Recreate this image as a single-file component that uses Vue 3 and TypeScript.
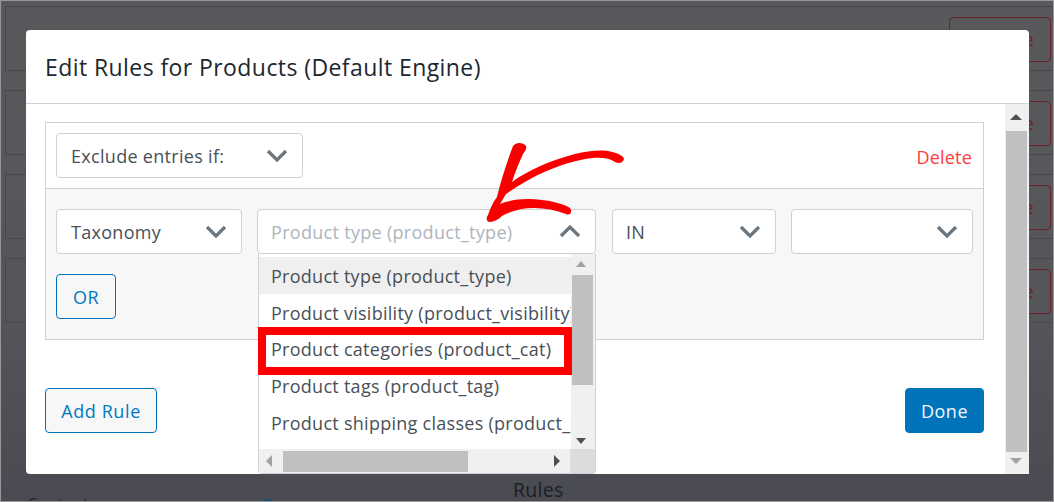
<script setup lang="ts">
const items: string[] = [
  'Product type (product_type)',
  'Product visibility (product_visibility)',
  'Product categories (product_cat)',
  'Product tags (product_tag)',
  'Product shipping classes (product_shipping_class)',
]
const bgRows: number[] = [1, 2, 3, 4]
</script>

<template>
  <div class="page">
    <div class="backdrop-content">
      <div v-for="r in bgRows" :key="r" class="bg-row">
        <span class="bg-btn">Delete</span>
      </div>
      <div class="bg-bottom">
        <div class="bg-left"><span class="bg-label">Content</span><i class="bg-dot"></i></div>
        <div class="bg-right">Rules</div>
      </div>
    </div>

    <div class="modal">
      <header class="modal-head">Edit Rules for Products (Default Engine)</header>
      <div class="modal-body">
        <div class="content">
          <section class="panel">
            <div class="panel-top">
              <div class="select w-exclude"><span>Exclude entries if:</span><svg class="chev" viewBox="0 0 22 13"><path d="M2 2l9 9 9-9" /></svg></div>
              <a class="delete">Delete</a>
            </div>
            <div class="panel-rows">
              <div class="row">
                <div class="select w-tax"><span>Taxonomy</span><svg class="chev" viewBox="0 0 22 13"><path d="M2 2l9 9 9-9" /></svg></div>
                <div class="select w-type open"><span class="ph">Product type (product_type)</span><svg class="chev" viewBox="0 0 22 13"><path d="M2 11l9-9 9 9" /></svg></div>
                <div class="select w-in"><span>IN</span><svg class="chev" viewBox="0 0 22 13"><path d="M2 2l9 9 9-9" /></svg></div>
                <div class="select w-val"><span></span><svg class="chev" viewBox="0 0 22 13"><path d="M2 2l9 9 9-9" /></svg></div>
              </div>
              <button class="btn outline or">OR</button>
            </div>
          </section>
          <div class="actions">
            <button class="btn outline add">Add Rule</button>
            <button class="btn solid done">Done</button>
          </div>
        </div>
        <div class="vbar">
          <i class="tri up dark"></i>
          <div class="vthumb"></div>
          <i class="tri down light"></i>
        </div>
      </div>

      <div class="dropdown">
        <div class="dd-main">
          <ul class="dd-list">
            <li v-for="(it, i) in items" :key="it" :class="{ active: i === 0 }">{{ it }}</li>
          </ul>
          <div class="dd-vbar">
            <i class="tri up light small"></i>
            <div class="dd-vthumb"></div>
            <i class="tri down dark small"></i>
          </div>
        </div>
        <div class="dd-hbar">
          <div class="dd-htrack">
            <i class="tri left light"></i>
            <div class="dd-hthumb"></div>
            <i class="tri right dark"></i>
          </div>
          <div class="dd-corner"></div>
        </div>
        <div class="redbox"></div>
      </div>
    </div>

    <svg class="arrow" viewBox="0 0 1054 502">
      <path d="M513 146 C516 142 523 142 526 146 C527 149 525 151 523 154 C519 163 515 172 512 182 C528 170 552 160 575 154 C588 151 602 149 612 152 C617 153 624 156 624 159 C623 163 619 164 615 162 C608 157 598 157 585 159 C558 164 530 177 506 194 C504 197 502 201 500 204 C512 199 528 198 542 200 C552 201 564 204 570 208 C573 212 570 216 566 214 C556 210 545 208 534 208 C522 208 511 211 502 216 C498 220 493 222 489 222 C486 221 486 218 488 215 C490 209 493 202 497 197 C501 180 507 162 513 146 Z" fill="#f90000" />
    </svg>
  </div>
</template>

<style>
html, body { margin: 0; padding: 0; background: #55565a; }
</style>

<style scoped>
.page {
  position: relative;
  width: 1054px;
  height: 502px;
  overflow: hidden;
  background: linear-gradient(180deg, #58595b 0%, #55565a 60%, #4a4b52 100%);
  border: 1px solid #97979a;
  box-sizing: border-box;
  font-family: "Open Sans", "Noto Sans", sans-serif;
  letter-spacing: 0.3px;
}
.backdrop-content { padding: 5px 0 0 4px; }
.bg-row {
  height: 65px;
  margin-bottom: 19px;
  width: 1100px;
  box-sizing: border-box;
  border: 1px solid #47484c;
  padding: 10px 0 0 943px;
}
.bg-btn {
  display: block;
  width: 102px;
  height: 45px;
  box-sizing: border-box;
  border: 1px solid #6b2228;
  border-radius: 4px;
  color: #6b2228;
  font-size: 18px;
  line-height: 43px;
  text-align: right;
  padding-right: 16px;
}
.bg-bottom { display: flex; height: 60px; margin-top: 156px; }
.bg-left { width: 472px; position: relative; }
.bg-right { flex: 1; padding: 0 0 0 35px; font-size: 19.5px; color: #1b1e22; line-height: 22px; border-left: 1px solid #47484c; font-weight: 500; }
.bg-label { position: absolute; left: 22px; top: 14px; font-size: 16px; color: #222; }
.bg-dot { position: absolute; left: 255px; top: 20px; width: 14px; height: 14px; border-radius: 50%; background: #0f4f78; }

.modal {
  position: absolute;
  left: 25px;
  top: 29px;
  width: 1003px;
  height: 444px;
  background: #fff;
  border-radius: 4px 4px 0 4px;
  display: flex;
  flex-direction: column;
}
.modal-head {
  height: 73px;
  border-bottom: 1px solid #ced2d6;
  box-sizing: content-box;
  padding-left: 19px;
  font-size: 23px;
  font-weight: 500;
  letter-spacing: 0.42px;
  line-height: 75px;
  color: #1c2730;
}
.modal-body { flex: 1; display: flex; min-height: 0; }
.content { flex: 1; padding: 18px 0 0 19px; }
.panel {
  width: 939px;
  height: 218px;
  box-sizing: border-box;
  border: 1px solid #ced2d6;
  display: flex;
  flex-direction: column;
}
.panel-top {
  height: 65px;
  flex: none;
  display: flex;
  align-items: center;
  justify-content: space-between;
  padding: 0 11px 0 10px;
  border-bottom: 1px solid #ced2d6;
}
.delete { color: #ff3b3b; font-size: 18px; letter-spacing: 0.2px; margin-top: 2px; }
.panel-rows { flex: 1; background: #f7f7f7; padding: 20px 10px 0; }
.row { display: flex; gap: 15px; }
.select {
  display: flex;
  align-items: center;
  justify-content: space-between;
  height: 45px;
  box-sizing: border-box;
  background: #fff;
  border: 1px solid #ced2d6;
  border-radius: 4px;
  padding: 0 14px 0 13px;
  font-size: 18px;
  color: #495057;
}
.w-exclude { width: 247px; padding-left: 14px; }
.w-tax { width: 186px; padding-left: 14px; }
.w-type { width: 339px; }
.w-in { width: 164px; margin-left: 1px; }
.w-val { width: 182px; }
.ph { color: #adb5bd; }
.chev { width: 22px; height: 13px; flex: none; }
.chev path { fill: none; stroke: #6b757d; stroke-width: 3.2; }
.btn {
  display: block;
  height: 45px;
  box-sizing: border-box;
  border-radius: 4px;
  font: inherit;
  font-size: 18px;
  letter-spacing: 0.5px;
  padding: 0;
}
.outline { background: #f7f7f7; border: 1px solid #0073ba; color: #0079c0; }
.solid { background: #0073ba; border: 1px solid #0073ba; color: #f2f9ff; }
.or { width: 60px; margin-top: 20px; }
.actions { width: 939px; display: flex; justify-content: space-between; margin-top: 48px; }
.actions .btn { padding-top: 1px; }
.add { width: 112px; letter-spacing: 0.6px; }
.done { width: 79px; }

.vbar {
  width: 24px;
  background: #f0f0f0;
  display: flex;
  flex-direction: column;
  align-items: flex-start;
  padding: 10px 0 10px 1px;
  box-sizing: border-box;
}
.vbar .tri { margin-left: 4px; }
.vthumb { width: 21px; flex: 1; background: #c0c0c0; margin: 11px 0 6px; }
.tri { display: block; width: 0; height: 0; border-style: solid; border-color: transparent; }
.tri.up { border-width: 0 6px 6px; }
.tri.down { border-width: 6px 6px 0; }
.tri.left { border-width: 6px 6px 6px 0; }
.tri.right { border-width: 6px 0 6px 6px; }
.tri.up.dark { border-bottom-color: #505050; }
.tri.up.light { border-bottom-color: #a3a3a3; }
.tri.down.dark { border-top-color: #505050; }
.tri.down.light { border-top-color: #a3a3a3; }
.tri.left.light { border-right-color: #a3a3a3; }
.tri.right.dark { border-left-color: #505050; }

.dropdown {
  position: absolute;
  left: 232px;
  top: 224px;
  width: 338px;
  height: 220px;
  box-sizing: border-box;
  background: #fff;
  border: 1px solid #ced2d6;
  border-top: 0;
  border-radius: 0 0 4px 4px;
  display: flex;
  flex-direction: column;
}
.dd-main { flex: 1; display: flex; min-height: 0; padding-top: 3px; }
.dd-list {
  list-style: none;
  margin: 0;
  padding: 0;
  flex: 1;
  min-width: 0;
  overflow: hidden;
}
.dd-list li {
  height: 36.7px;
  line-height: 39px;
  padding-left: 12px;
  font-size: 18px;
  letter-spacing: 0.27px;
  color: #495057;
  white-space: nowrap;
}
.dd-list li.active { background: #efefef; }
.dd-vbar {
  width: 24px;
  flex: none;
  margin-top: -3px;
  background: #f0f0f0;
  display: flex;
  flex-direction: column;
  align-items: flex-start;
  padding: 7px 0 5px 0;
  box-sizing: border-box;
}
.dd-vbar .tri { margin-left: 5px; }
.tri.small.up { border-width: 0 5.5px 6px; }
.tri.small.down { border-width: 6px 5.5px 0; }
.dd-vthumb { width: 21px; height: 110px; margin: 8px 0 auto 1px; background: #c0c0c0; }
.dd-hbar { height: 24px; display: flex; flex: none; }
.dd-htrack {
  flex: 1;
  background: #f0f0f0;
  display: flex;
  align-items: center;
  padding: 0 10px 0 7px;
}
.dd-hthumb { width: 185px; height: 21px; background: #c0c0c0; margin: 0 auto 0 11px; }
.dd-corner { width: 25px; background: #dcdcdc; }
.redbox {
  position: absolute;
  left: -1px;
  top: 73px;
  width: 314px;
  height: 48px;
  box-sizing: border-box;
  border: 8px solid #fe0000;
}
.arrow {
  position: absolute;
  left: -1px;
  top: -1px;
  width: 1054px;
  height: 502px;
  pointer-events: none;
}
</style>
